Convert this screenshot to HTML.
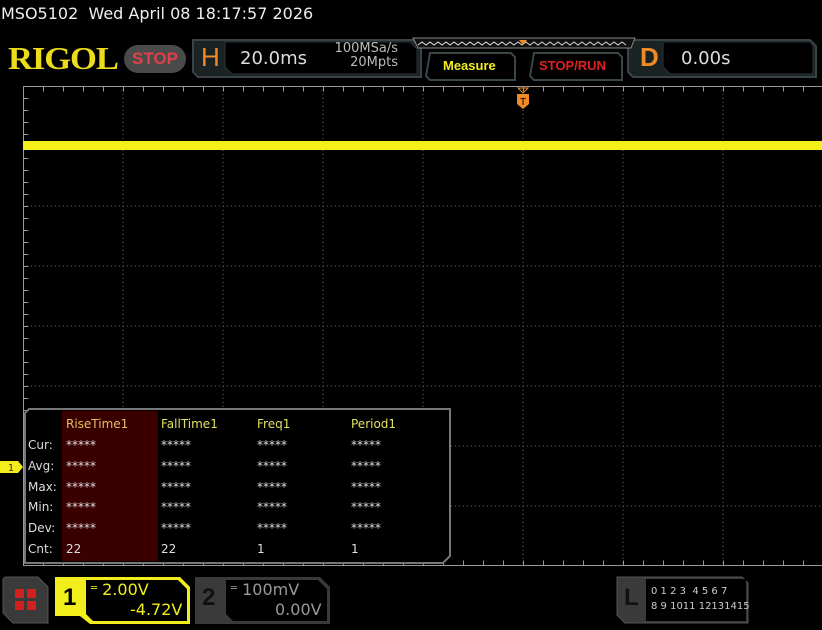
<!DOCTYPE html>
<html><head><meta charset="utf-8"><style>
*{margin:0;padding:0;box-sizing:border-box}
body{width:822px;height:630px;background:#000;overflow:hidden;position:relative;font-family:"DejaVu Sans","Liberation Sans",sans-serif;color:#ddd}
.a{position:absolute;white-space:nowrap}
</style></head><body>
<div class="a" style="left:1px;top:4px;font-size:16px;color:#eee">MSO5102&nbsp; Wed April 08 18:17:57 2026</div>
<div class="a" style="left:8px;top:40px;font-family:'Liberation Serif',serif;font-weight:bold;font-size:32px;color:#ecdc1a;letter-spacing:-1px;transform:scaleX(1.08);transform-origin:left">RIGOL</div>
<div class="a" style="left:124px;top:45px;width:62px;height:28px;border-radius:14px;background:#4a4a4a;color:#e0404a;font-family:'Liberation Sans';font-weight:bold;font-size:17px;text-align:center;line-height:28px">STOP</div>

<svg class="a" style="left:0;top:0" width="822" height="630">
 <path d="M193 40 L413 40 L421 48 L421 77 L198 77 L193 72Z" fill="#1a2224" stroke="#3a4446" stroke-width="2"/>
 <path d="M225 42 L410 42 L417 49 L417 74 L232 74 L225 67Z" fill="#000" stroke="#2a3436"/>
 <path d="M628 40 L810 40 L816 46 L816 77 L633 77 L628 72Z" fill="#1a2224" stroke="#3a4446" stroke-width="2"/>
 <path d="M663 42 L810 42 L813 46 L813 74 L670 74 L663 67Z" fill="#000" stroke="#2a3436"/>
 <path d="M413 38 L635 38 L631 48 L418 48Z" fill="#111" stroke="#888"/>
 <polyline points="418,45 422,42 426,45 430,42 434,45 438,42 442,45 446,42 450,45 454,42 458,45 462,42 466,45 470,42 474,45 478,42 482,45 486,42 490,45 494,42 498,45 502,42 506,45 510,42 514,45 518,42 522,45 526,42 530,45 534,42 538,45 542,42 546,45 550,42 554,45 558,42 562,45 566,42 570,45 574,42 578,45 582,42 586,45 590,42 594,45 598,42 602,45 606,42 610,45 614,42 618,45 622,42 626,45" fill="none" stroke="#ddd" stroke-width="1"/>
 <path d="M519 40 L527 40 L523 45Z" fill="#f08a24"/>
 <path d="M430 53 L511 53 L515 57 L515 80 L430 80 L426 76Z" fill="#000" stroke="#3a4648" stroke-width="2"/>
 <path d="M534 53 L618 53 L622 57 L622 80 L534 80 L530 76Z" fill="#000" stroke="#3a4648" stroke-width="2"/>
 <g stroke="#666" stroke-width="1" stroke-dasharray="1,3">
  <line x1="123" y1="86" x2="123" y2="566"/><line x1="223" y1="86" x2="223" y2="566"/><line x1="323" y1="86" x2="323" y2="566"/><line x1="423" y1="86" x2="423" y2="566"/><line x1="523" y1="86" x2="523" y2="566"/><line x1="623" y1="86" x2="623" y2="566"/><line x1="723" y1="86" x2="723" y2="566"/>
  <line x1="23" y1="206" x2="822" y2="206"/><line x1="23" y1="266" x2="822" y2="266"/><line x1="23" y1="326" x2="822" y2="326"/><line x1="23" y1="386" x2="822" y2="386"/><line x1="23" y1="446" x2="822" y2="446"/><line x1="23" y1="506" x2="822" y2="506"/>
 </g>
 <g stroke="#999" stroke-width="1">
  <line x1="23" y1="86.5" x2="822" y2="86.5"/><line x1="23" y1="565.5" x2="822" y2="565.5"/><line x1="23.5" y1="86" x2="23.5" y2="566"/>
 </g>
 <g stroke="#999">
  <line x1="43" y1="89" x2="822" y2="89" stroke-width="5" stroke-dasharray="1 19"/>
  <line x1="43" y1="563" x2="822" y2="563" stroke-width="5" stroke-dasharray="1 19"/>
  <line x1="26" y1="98" x2="26" y2="566" stroke-width="5" stroke-dasharray="1 11"/>
 </g>
 <rect x="23" y="141" width="799" height="9" fill="#f5f01a"/>
 <path d="M517 94 L529 94 L529 104 L523 109 L517 104Z" fill="#f08a24"/>
 <path d="M518 88 L528 88 L523 93Z" fill="none" stroke="#f08a24"/>
 <text x="523" y="105" font-size="10" fill="#000" text-anchor="middle" font-family="Liberation Sans">T</text>
 <path d="M29 409 L450 409 L450 556 L443 563 L25 563 L25 413Z" fill="#000" stroke="#777" stroke-width="2"/>
 <rect x="62" y="411" width="96" height="150" fill="#3a0000"/>
 <path d="M0 461 L18 461 L23 467 L18 473 L0 473Z" fill="#f2ee1c"/>
 <text x="11" y="471" font-size="10" fill="#333" text-anchor="middle">1</text>
 <path d="M5 577 L38 577 L48 587 L48 623 L13 623 L3 613 L3 579Z" fill="#3a3a3a" stroke="#555"/>
 <g fill="#d02020"><rect x="15" y="589" width="9" height="9"/><rect x="27" y="589" width="9" height="9"/><rect x="15" y="601" width="9" height="9"/><rect x="27" y="601" width="9" height="9"/></g>
 <path d="M55 577 L180 577 L190 587 L190 624 L90 624 L80 616 L55 616Z" fill="#f2ee1c"/>
 <path d="M86 580 L178 580 L187 589 L187 621 L93 621 L86 614Z" fill="#000"/>
 <path d="M195 577 L320 577 L330 587 L330 624 L195 624Z" fill="#3a3a3a"/>
 <path d="M226 580 L318 580 L327 589 L327 621 L233 621 L226 614Z" fill="#000"/>
 <path d="M617 577 L742 577 L748 583 L748 623 L625 623 L617 615Z" fill="#3a3a3a" stroke="#555"/>
 <rect x="646" y="579" width="100" height="42" fill="#000"/>
</svg>
<div class="a" style="left:201px;top:42px;font-size:26px;color:#f08a24;font-family:'Liberation Sans'">H</div>
<div class="a" style="left:240px;top:48px;font-size:18px;color:#ddd">20.0ms</div>
<div class="a" style="left:323px;top:42px;font-size:13px;color:#bbb;text-align:right;line-height:14px;width:75px">100MSa/s<br>20Mpts</div>
<div class="a" style="left:640px;top:42px;font-size:26px;color:#f08a24;font-family:'Liberation Sans';font-weight:bold">D</div>
<div class="a" style="left:681px;top:48px;font-size:18px;color:#ddd">0.00s</div>
<div class="a" style="left:443px;top:58px;font-size:13px;font-weight:bold;color:#f2ee1c;font-family:'Liberation Sans'">Measure</div>
<div class="a" style="left:539px;top:58px;font-size:13px;font-weight:bold;color:#e02020;font-family:'Liberation Sans'">STOP/RUN</div>

<div class="a" style="left:0;top:414px;font-size:12px;line-height:20.8px">
<div class="a" style="left:66px;top:0;color:#e0c060">RiseTime1</div>
<div class="a" style="left:161px;top:0;color:#e0e060">FallTime1</div>
<div class="a" style="left:257px;top:0;color:#e0e060">Freq1</div>
<div class="a" style="left:351px;top:0;color:#e0e060">Period1</div>
<div class="a" style="left:28px;top:21px;color:#ddd">Cur:<br>Avg:<br>Max:<br>Min:<br>Dev:<br>Cnt:</div>
<div class="a" style="left:66px;top:21px;color:#ddd">*****<br>*****<br>*****<br>*****<br>*****<br>22</div>
<div class="a" style="left:161px;top:21px;color:#ddd">*****<br>*****<br>*****<br>*****<br>*****<br>22</div>
<div class="a" style="left:257px;top:21px;color:#ddd">*****<br>*****<br>*****<br>*****<br>*****<br>1</div>
<div class="a" style="left:351px;top:21px;color:#ddd">*****<br>*****<br>*****<br>*****<br>*****<br>1</div>
</div>

<div class="a" style="left:63px;top:584px;font-size:24px;font-weight:bold;color:#000;font-family:'Liberation Sans'">1</div>
<div class="a" style="left:91px;top:580px;font-size:16px;color:#f2ee1c"><span style="font-size:10px;vertical-align:4px">═</span> 2.00V</div>
<div class="a" style="left:130px;top:600px;font-size:16px;color:#f2ee1c">-4.72V</div>
<div class="a" style="left:202px;top:584px;font-size:24px;font-weight:bold;color:#111;font-family:'Liberation Sans'">2</div>
<div class="a" style="left:231px;top:580px;font-size:16px;color:#999"><span style="font-size:10px;vertical-align:4px">═</span> 100mV</div>
<div class="a" style="left:275px;top:600px;font-size:16px;color:#999">0.00V</div>
<div class="a" style="left:624px;top:584px;font-size:24px;font-weight:bold;color:#111;font-family:'Liberation Sans'">L</div>
<div class="a" style="left:651px;top:584px;font-size:10px;color:#ccc;line-height:15px">0 1 2 3 &nbsp;4 5 6 7<br>8 9 1011 12131415</div>
</body></html>
